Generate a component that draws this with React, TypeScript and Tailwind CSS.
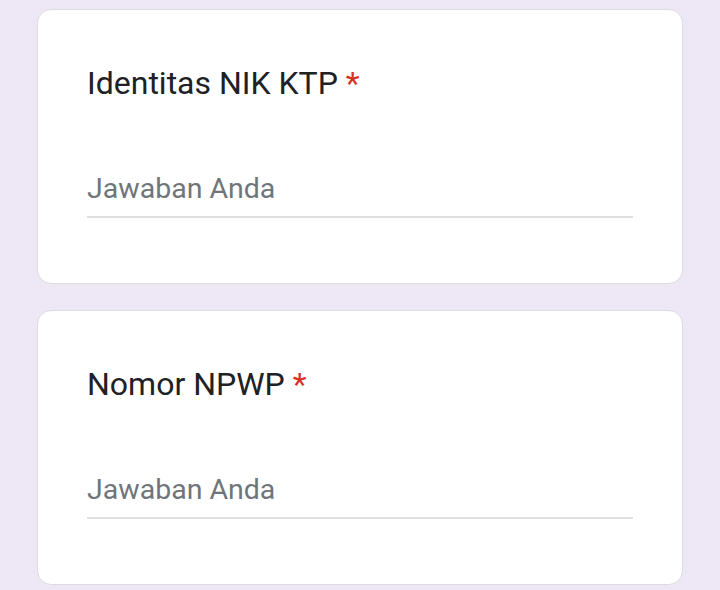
function QuestionCard({ title }: { title: string }) {
  return (
    <div className="bg-white border border-[#dadce0] rounded-[14px] px-[49px] pt-[53px] pb-[65px]">
      <div className="text-[32px] leading-[40px] text-[#202124]">
        {title} <span className="text-[#d93025]">*</span>
      </div>
      <div className="mt-[68px] border-b-2 border-[#e0e0e0] pb-[9px] text-[28.5px] leading-[36px] text-[#70757a]">
        Jawaban Anda
      </div>
    </div>
  );
}

export default function App() {
  return (
    <div
      className="w-[720px] h-[590px] overflow-hidden bg-[#ede7f6] px-[37px] pt-[9px] flex flex-col gap-[26px]"
      style={{ fontFamily: "Roboto, 'Noto Sans', sans-serif" }}
    >
      <QuestionCard title="Identitas NIK KTP" />
      <QuestionCard title="Nomor NPWP" />
    </div>
  );
}
